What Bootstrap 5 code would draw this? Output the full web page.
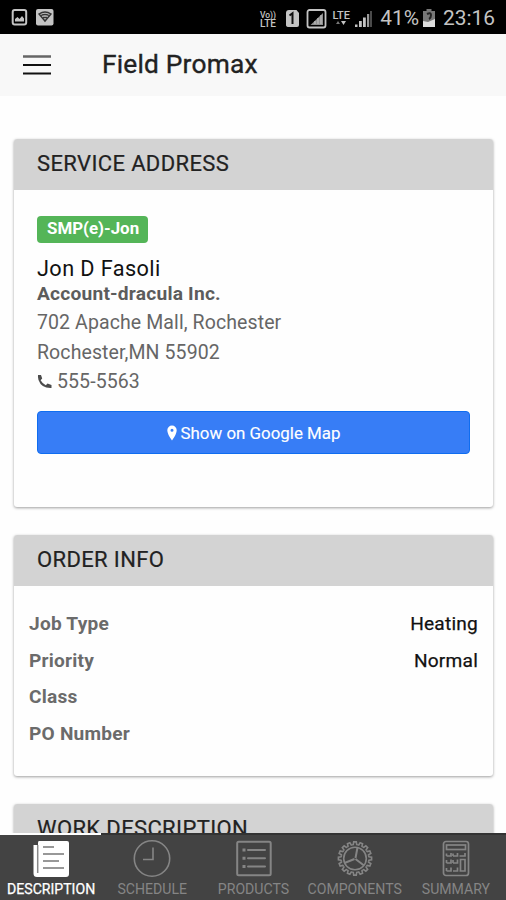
<!DOCTYPE html>
<html lang="en">
<head>
<meta charset="utf-8">
<meta name="viewport" content="width=device-width, initial-scale=1">
<title>Field Promax</title>
<link href="https://cdn.jsdelivr.net/npm/bootstrap@5.3.0/dist/css/bootstrap.min.css" rel="stylesheet">
<style>
  body { font-family: Roboto, "Liberation Sans", sans-serif; color: #666; background: #fefefe; }
  .screen { height: 900px; }
  svg { display: block; flex: none; }
  .status-bar { height: 34px; background: #000; color: #c4c4c4; font-size: 20.9px; line-height: 34px; padding: 2px 11px 0 10px; }
  .battery { margin: 1px 7px 0 3px; }
  .app-bar { height: 62px; background: #f8f8f8; padding: 0 22px; }
  .app-title { font-size: 26.3px; line-height: 30px; color: #222; margin: 0 0 2px 50px; letter-spacing: .2px; -webkit-text-stroke: .35px #222; }
  .content { padding: 43px 13px 0 14px; min-height: 0; }
  .panel { border: 0; border-radius: 3px; background: #fefefe; box-shadow: 0 1px 3px rgba(0,0,0,.38); margin-bottom: 28px; flex: none; }
  .panel-title { height: 51px; background: #d3d3d3; color: #222; font-size: 22px; line-height: 50px; padding: 0 23px; border: 0; letter-spacing: .37px; -webkit-text-stroke: .2px #222; }
  .panel > .panel-title:first-child { border-radius: 3px 3px 0 0; }
  .address-body { height: 317px; padding: 26px 23px 0; }
  .tag { height: 27px; background: #54b558; border-radius: 4px; font-size: 16.9px; line-height: 25px; padding: 0 9px 0 10px; font-weight: 700; }
  .person { color: #111; font-size: 21.7px; line-height: 26px; margin-top: 13px; letter-spacing: .4px; }
  .company { font-size: 19.2px; line-height: 24px; letter-spacing: .2px; font-weight: 700; color: #5c5c5c; margin-bottom: 2px; }
  .line { font-size: 19.5px; line-height: 29.6px; letter-spacing: .1px; }
  .map-btn { height: 43px; margin-top: 14px; background: #377df6; border: 1px solid #0f6df0; border-radius: 4px; color: #fff; font-size: 16.9px; line-height: 24px; padding: 1px 0 0; -webkit-text-stroke: .15px #fff; }
  .order-body { height: 190px; padding: 20px 15px 0; font-size: 19.1px; line-height: 36.6px; letter-spacing: .22px; }
  .order-body strong { font-weight: 700; color: #6b6b6b; }
  .order-body span { color: #111; -webkit-text-stroke: .25px #111; }
  .tabs { height: 67px; background: #434343; border-top: 2px solid #333; color: #858585; }
  .tab { flex: 1 1 0; min-width: 0; padding: 5px 0 0 1px; font-size: 14.1px; line-height: 18px; position: relative; white-space: nowrap; }
  .tab svg { margin-bottom: 2px; }
  .tab.active { color: #fff; -webkit-text-stroke: .25px #fff; }
  .tab.active::before { content: ""; position: absolute; left: 0; right: 0; top: -2px; height: 2px; background: #fff; }
</style>
<script src="https://cdn.jsdelivr.net/npm/bootstrap@5.3.0/dist/js/bootstrap.bundle.min.js"></script>
</head>
<body>
<div class="screen d-flex flex-column overflow-hidden">
  <div class="status-bar d-flex flex-shrink-0 align-items-center justify-content-between">
    <svg width="46" height="20" viewBox="0 0 46 20">
      <rect x="2.700" y="2" width="13.500" height="14.500" rx="2" fill="none" stroke="#c4c4c4" stroke-width="2"/>
      <path d="M5 13.500V11l2.500-2 2 2 2.500-3 2 2.500v3z" fill="#c4c4c4"/>
      <rect x="26" y="1" width="17.500" height="16.500" rx="2" fill="#c4c4c4"/>
      <path d="M29 6q6-4 12 0l-6 7z" fill="none" stroke="#333" stroke-width="1.500"/><path d="M31 7.500q4-2 8 0M33 9.500h4" fill="none" stroke="#333" stroke-width="1.300"/>
    </svg>
    <div class="d-flex align-items-center">
      <svg class="me-2" width="114" height="30" viewBox="0 0 114 30" fill="#c4c4c4" font-family="Roboto, sans-serif" font-weight="500">
        <text x="2" y="14.500" font-size="9" textLength="16" lengthAdjust="spacingAndGlyphs">Vo))</text>
        <text x="2" y="24" font-size="10" textLength="16" lengthAdjust="spacingAndGlyphs">LTE</text>
        <path d="M31 7h7.500l2.500 3v12q0 2-2 2h-8q-3 0-3-2V10q0-3 3-3z"/><path d="M31.500 12.500l3-2.200V21" fill="none" stroke="#111" stroke-width="2"/>
        <rect x="49.500" y="7" width="18" height="17.500" rx="2" fill="none" stroke="#c4c4c4" stroke-width="1.800"/>
        <path d="M52.500 22L65 10v12z" fill="#8e8e8e"/><path d="M57 21v-3M60 21v-6M63 21v-9" stroke="#bbb" stroke-width="1.300"/>
        <text x="74.500" y="15.500" font-size="11" textLength="17.500" lengthAdjust="spacingAndGlyphs">LTE</text>
        <path d="M80 18l2 3h-4z" fill="#777"/><path d="M83 18h5l-2.500 4z"/>
        <path d="M97 21.500h2.500V24H97zM101 18h2.800v6H101zM105 14.500h2.800V24H105z"/><path d="M109 11h2.200v13H109z" fill="#999"/><path d="M112 8h2v16h-2z" fill="#4a4a4a"/>
      </svg>
      <span>41%</span>
      <svg class="battery" width="14" height="20" viewBox="0 0 14 20"><path d="M4.500 0h5v2H13v16H1V2h3.500z" fill="#777"/><path d="M1 12l5 1 7-3v8H1z" fill="#ddd"/><path d="M5 5q4-2 4 1t-2 4" fill="none" stroke="#222" stroke-width="2"/></svg>
      <span>23:16</span>
    </div>
  </div>

  <header class="app-bar d-flex flex-shrink-0 align-items-center">
    <svg width="30" height="22" viewBox="0 0 30 22"><path d="M1 2.500h28" stroke="#666" stroke-width="2.500"/><path d="M1 11h28M1 19.500h28" stroke="#111" stroke-width="2.200"/></svg>
    <div class="app-title">Field Promax</div>
  </header>

  <main class="content flex-grow-1 overflow-hidden d-flex flex-column">
    <section class="card panel">
      <div class="card-header panel-title">SERVICE ADDRESS</div>
      <div class="address-body d-flex flex-column">
        <div class="badge tag align-self-start">SMP(e)-Jon</div>
        <div class="person">Jon D Fasoli</div>
        <div class="company">Account-dracula Inc.</div>
        <div class="line">702 Apache Mall, Rochester</div>
        <div class="line">Rochester,MN 55902</div>
        <div class="line d-flex align-items-center">
          <svg width="20" height="16" viewBox="0 0 20 16"><path d="M1 1h3l1.200 3.600L3.600 6.200q2 3.600 5.200 5l1.700-1.700L14.500 11v3Q4.500 14.500 1.500 6 .7 3 1 1z" fill="#4c4c4c"/></svg>
          <span>555-5563</span>
        </div>
        <button class="btn map-btn w-100 d-flex align-items-center justify-content-center" type="button">
          <svg width="14" height="16" viewBox="0 0 14 16"><path fill-rule="evenodd" d="M5 .5a4.700 4.700 0 0 1 4.700 4.700Q9.700 9 5 15.500.3 9 .3 5.200A4.700 4.700 0 0 1 5 .5zm0 3.300a1.500 1.500 0 1 0 0 3 1.500 1.500 0 0 0 0-3z" fill="#fff"/></svg>
          <span>Show on Google Map</span>
        </button>
      </div>
    </section>

    <section class="card panel">
      <div class="card-header panel-title">ORDER INFO</div>
      <div class="order-body">
        <div class="d-flex justify-content-between"><strong>Job Type</strong><span>Heating</span></div>
        <div class="d-flex justify-content-between"><strong>Priority</strong><span>Normal</span></div>
        <div><strong>Class</strong></div>
        <div><strong>PO Number</strong></div>
      </div>
    </section>

    <section class="card panel">
      <div class="card-header panel-title">WORK DESCRIPTION</div>
    </section>
  </main>

  <nav class="tabs d-flex flex-shrink-0">
    <div class="tab active d-flex flex-column align-items-center">
      <svg width="38" height="38" viewBox="0 0 38 38"><path d="M7 1h28q2 0 2 2v31q0 3-3 3H5q-3.500 0-3.500-3.500V5H6V3q0-2 1-2z" fill="#fff"/><path d="M5.700 5v28" stroke="#888" stroke-width="1.500"/><path d="M11 7h11M11 14h21M11 21h16M11 28h21" stroke="#777" stroke-width="1.500"/></svg>
      <span>DESCRIPTION</span>
    </div>
    <div class="tab d-flex flex-column align-items-center">
      <svg width="38" height="38" viewBox="0 0 38 38" fill="none" stroke="#858585" stroke-width="1.600"><circle cx="19" cy="18.500" r="17.700"/><path d="M20 7.500V19.500H10"/></svg>
      <span>SCHEDULE</span>
    </div>
    <div class="tab d-flex flex-column align-items-center">
      <svg width="38" height="38" viewBox="0 0 38 38" fill="none" stroke="#858585" stroke-width="2"><rect x="2.200" y="1.700" width="33.500" height="33.500" rx="1.500"/><path d="M13 10h17M13 18.200h17M13 26.500h17" stroke-linecap="round"/><path d="M7.500 10h3M7.500 18.200h3M7.500 26.500h3" stroke-width="3"/></svg>
      <span>PRODUCTS</span>
    </div>
    <div class="tab d-flex flex-column align-items-center">
      <svg width="38" height="38" viewBox="-19 -18.500 38 38" fill="none" stroke="#858585" stroke-width="1.600">
        <defs><g id="tooth"><path d="M-2.700-13.500L-1.700-14-1.300-16.600H1.300L1.700-14 2.700-13.500"/></g>
        <g id="quarter"><use href="#tooth"/><use href="#tooth" transform="rotate(22.500)"/><use href="#tooth" transform="rotate(45)"/><use href="#tooth" transform="rotate(67.500)"/></g></defs>
        <use href="#quarter"/><use href="#quarter" transform="rotate(90)"/><use href="#quarter" transform="rotate(180)"/><use href="#quarter" transform="rotate(270)"/>
        <circle r="11.300"/><path d="M.5-.5L2.500-11M-.5 .5L-10.500 4.500M.5 .5L9 7" stroke-width="2"/>
      </svg>
      <span>COMPONENTS</span>
    </div>
    <div class="tab d-flex flex-column align-items-center">
      <svg width="38" height="38" viewBox="0 0 38 38" fill="none" stroke="#858585" stroke-width="1.700"><rect x="6.500" y="1.500" width="25" height="34" rx="2.500"/><rect x="9.500" y="5" width="19" height="4.500"/><path d="M9.500 16h4.500v-3M16 16h4.500v-3M22.500 16h5.500v-3M9.500 23h4.500v-3.500M16 23h4.500v-3.500M9.500 31h4.500v-3.500M16 31h4.500v-3.500M22.500 31h5.500V19.500h-4.500V31M9.500 13.500v2.500M16 13.500v2.500M9.500 20v3M16 20v3M9.500 28v3"/></svg>
      <span>SUMMARY</span>
    </div>
  </nav>
</div>
</body>
</html>
